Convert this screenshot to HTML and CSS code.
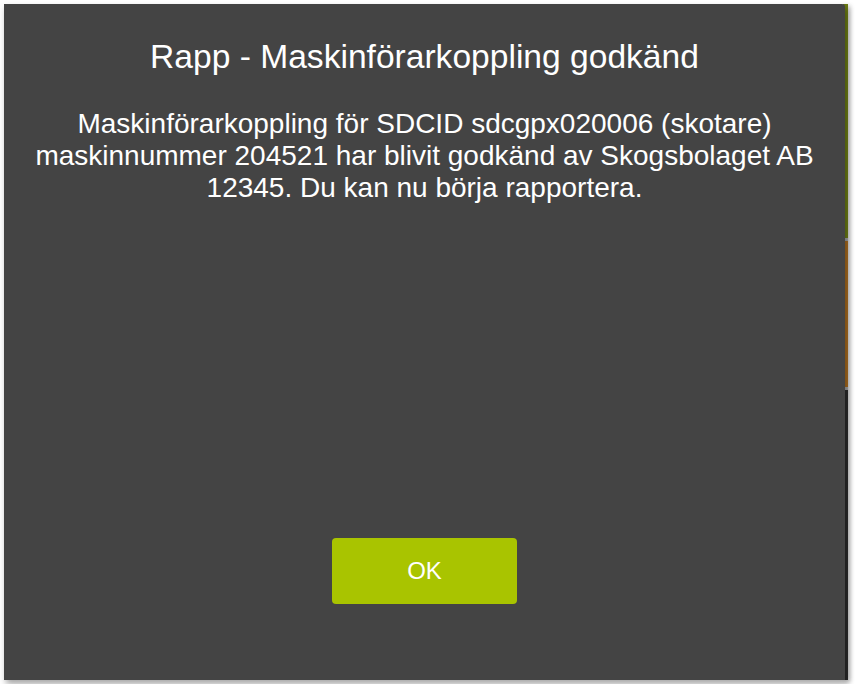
FILE: index.html
```html
<!DOCTYPE html>
<html lang="sv">
<head>
<meta charset="utf-8">
<title>Rapp</title>
<link rel="stylesheet" href="styles.css">
</head>
<body>
<div class="stage">
  <div class="backdrop-strip">
    <div class="seg seg-olive"></div>
    <div class="seg seg-sep"></div>
    <div class="seg seg-orange"></div>
    <div class="seg seg-sep"></div>
    <div class="seg seg-dark"></div>
  </div>
  <div class="dialog">
    <h1 class="dialog-title">Rapp - Maskinförarkoppling godkänd</h1>
    <p class="dialog-text">Maskinförarkoppling för SDCID sdcgpx020006 (skotare) maskinnummer 204521 har blivit godkänd av Skogsbolaget AB 12345. Du kan nu börja rapportera.</p>
    <div class="dialog-actions">
      <button class="btn-ok" type="button">OK</button>
    </div>
  </div>
</div>
</body>
</html>
```

FILE: styles.css
```css
html, body {
  margin: 0;
  padding: 0;
  background: #ffffff;
}

.stage {
  position: relative;
  padding: 4px;
  width: 841px;
  height: 676px;
}

.backdrop-strip {
  position: absolute;
  left: 843px;
  top: 4px;
  width: 5px;
  height: 676px;
  display: flex;
  flex-direction: column;
  box-shadow: 2px 2px 5px rgba(0,0,0,0.3);
}

.seg-olive { height: 234px; background: #6b7b14; }
.seg-sep { height: 3px; background: #a0a0a0; }
.seg-orange { height: 146px; background: #a66a1f; }
.seg-dark { flex: 1; background: #2a2a2a; }

.dialog {
  position: relative;
  width: 841px;
  height: 676px;
  background: #444444;
  border-top-right-radius: 3px;
  box-shadow: 2px 4px 6px rgba(0,0,0,0.35);
  display: flex;
  flex-direction: column;
  align-items: center;
  box-sizing: border-box;
  padding: 33px 16px 0;
  font-family: "Liberation Sans", Arial, sans-serif;
  color: #ffffff;
}

.dialog-title {
  margin: 0;
  font-size: 33.6px;
  line-height: 40px;
  font-weight: normal;
  text-align: center;
}

.dialog-text {
  margin: 31px 0 0;
  max-width: 800px;
  font-size: 28px;
  line-height: 32px;
  text-align: center;
}

.dialog-actions {
  margin-top: auto;
  margin-bottom: 76px;
}

.btn-ok {
  width: 185px;
  height: 66px;
  border: none;
  border-radius: 4px;
  background: #a9c400;
  color: #ffffff;
  font-family: "Liberation Sans", Arial, sans-serif;
  font-size: 24px;
  padding: 0;
}
```
